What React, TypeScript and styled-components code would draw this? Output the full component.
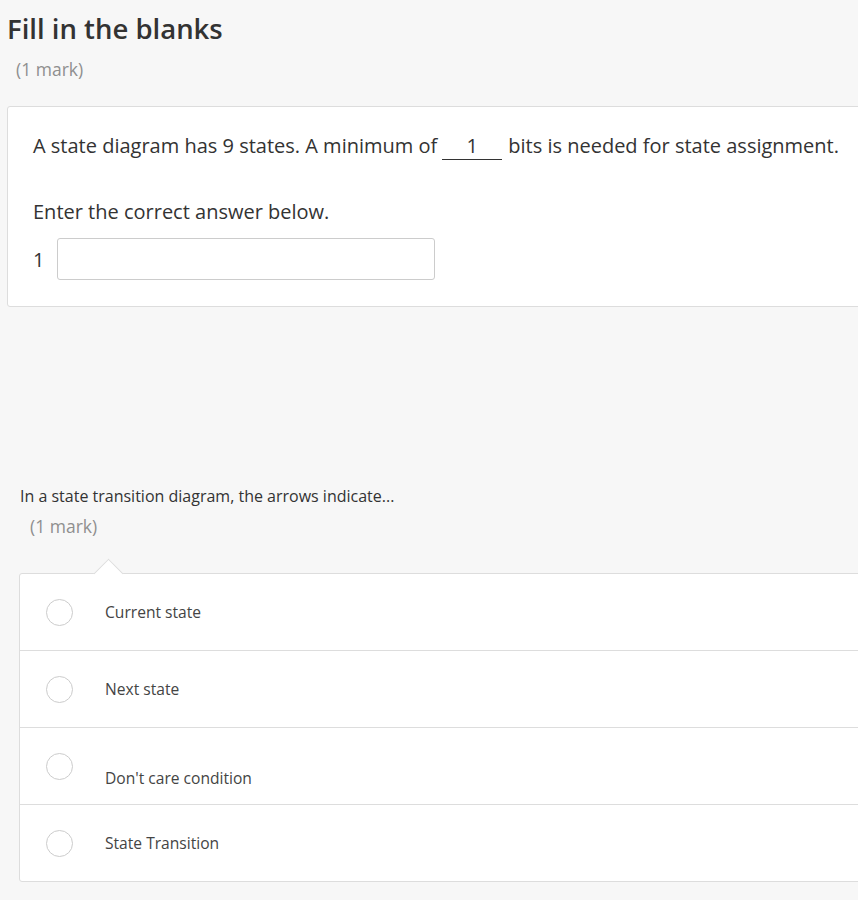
import styled, { createGlobalStyle } from 'styled-components';

const GlobalStyle = createGlobalStyle`
    html, body {
        margin: 0;
        padding: 0;
        background: #f7f7f7;
        font-family: "Open Sans", "Noto Sans", sans-serif;
        color: #333;
    }
`;

const Page = styled.div`
    width: 858px;
    overflow: hidden;
    padding-bottom: 20px;
`;

const Title = styled.h1`
    margin: 0;
    padding: 10px 0 0 7px;
    font-size: 27.5px;
    font-weight: 600;
    line-height: 38px;
    color: #333;
`;

const Mark = styled.div<{ $left: number; $top: number }>`
    padding: ${(p) => p.$top}px 0 0 ${(p) => p.$left}px;
    font-size: 17.5px;
    line-height: 22px;
    color: #8f8f8f;
`;

const Card = styled.section`
    margin: 26px -10px 0 7px;
    background: #fff;
    border: 1px solid #ddd;
    border-radius: 3px;
    padding: 24px 25px 26px 25px;
`;

const Prompt = styled.p`
    margin: 0;
    font-size: 20px;
    line-height: 30px;
    color: #333;
    white-space: nowrap;
`;

const Blank = styled.span`
    display: inline-block;
    width: 60px;
    margin: 0 6px 0 5px;
    border-bottom: 1px solid #333;
    text-align: center;
    line-height: 26px;
`;

const Instruction = styled.p`
    margin: 36px 0 0;
    font-size: 20px;
    line-height: 30px;
    color: #333;
`;

const AnswerRow = styled.div`
    display: flex;
    align-items: center;
    gap: 13px;
    margin-top: 11px;
`;

const AnswerIndex = styled.span`
    font-size: 20px;
    color: #333;
`;

const AnswerInput = styled.input`
    width: 378px;
    height: 42px;
    box-sizing: border-box;
    border: 1px solid #ccc;
    border-radius: 3px;
    background: #fff;
`;

const Question = styled.div`
    margin-top: 178px;
    padding-left: 20px;
    font-size: 16px;
    line-height: 22px;
    color: #333;
`;

const OptionList = styled.ul`
    position: relative;
    list-style: none;
    margin: 36px -10px 0 19px;
    padding: 0;
    background: #fff;
    border: 1px solid #ddd;
    border-radius: 3px;

    &::before {
        content: '';
        position: absolute;
        top: -11px;
        left: 78px;
        width: 20px;
        height: 20px;
        background: #fff;
        border-left: 1px solid #ddd;
        border-top: 1px solid #ddd;
        transform: rotate(45deg);
    }
`;

const Option = styled.li`
    display: flex;
    align-items: center;
    height: 76px;
    border-top: 1px solid #ddd;
    font-size: 15.6px;
    color: #444;

    &:first-child {
        border-top: none;
    }
`;

const Radio = styled.span`
    width: 25px;
    height: 25px;
    border: 1px solid #ccc;
    border-radius: 50%;
    margin: 0 32px 0 26px;
    flex-shrink: 0;
`;

const OptionText = styled.span<{ $offset?: number }>`
    position: relative;
    top: ${(p) => p.$offset || 0}px;
`;

const options = [
    { label: 'Current state' },
    { label: 'Next state' },
    { label: "Don't care condition", offset: 12 },
    { label: 'State Transition' },
];

function App() {
    return (
        <Page>
            <GlobalStyle />
            <Title>Fill in the blanks</Title>
            <Mark $left={16} $top={10}>(1 mark)</Mark>
            <Card>
                <Prompt>
                    A state diagram has 9 states. A minimum of
                    <Blank>1</Blank>
                    bits is needed for state assignment.
                </Prompt>
                <Instruction>Enter the correct answer below.</Instruction>
                <AnswerRow>
                    <AnswerIndex>1</AnswerIndex>
                    <AnswerInput type="text" />
                </AnswerRow>
            </Card>
            <Question>In a state transition diagram, the arrows indicate...</Question>
            <Mark $left={30} $top={8}>(1 mark)</Mark>
            <OptionList>
                {options.map((opt) => (
                    <Option key={opt.label}>
                        <Radio />
                        <OptionText $offset={opt.offset}>{opt.label}</OptionText>
                    </Option>
                ))}
            </OptionList>
        </Page>
    );
}

export default App;
